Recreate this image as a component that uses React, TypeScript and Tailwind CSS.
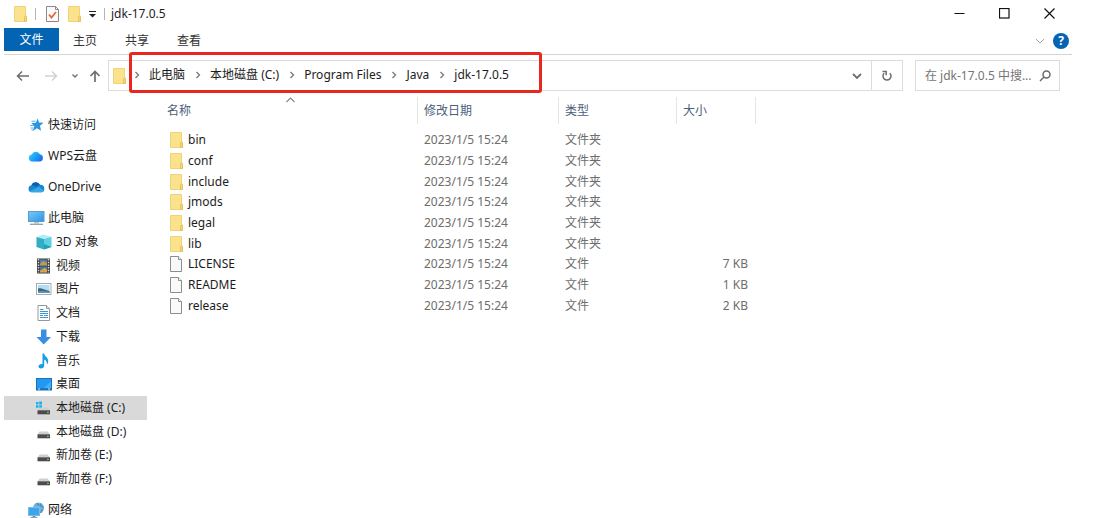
import type { ReactNode } from 'react';

const files = [
  { name: 'bin', type: '文件夹', size: '' },
  { name: 'conf', type: '文件夹', size: '' },
  { name: 'include', type: '文件夹', size: '' },
  { name: 'jmods', type: '文件夹', size: '' },
  { name: 'legal', type: '文件夹', size: '' },
  { name: 'lib', type: '文件夹', size: '' },
  { name: 'LICENSE', type: '文件', size: '7 KB' },
  { name: 'README', type: '文件', size: '1 KB' },
  { name: 'release', type: '文件', size: '2 KB' },
];

const path = ['此电脑', '本地磁盘 (C:)', 'Program Files', 'Java', 'jdk-17.0.5'];

function FolderIcon() {
  return (
    <svg width="13" height="16" viewBox="0 0 13 16" className="shrink-0">
      <path d="M0.5 0.5h11v9.5h1v5.5h-12z" fill="#fbe38e" stroke="#f0d277" />
      <path d="M10.5 15.5v-4.5l1-1.2 1 1.2v4.5z" fill="#f7d774" stroke="#e3be58" strokeWidth="0.8" />
    </svg>
  );
}

function FileIcon() {
  return (
    <svg width="13" height="16" viewBox="0 0 13 16" className="shrink-0">
      <path d="M0.5 0.5h8l3 3v12h-11z" fill="#f9f9f9" stroke="#8d8d8d" />
      <path d="M8.5 0.5v3h3" fill="#fff" stroke="#8d8d8d" />
    </svg>
  );
}

function StarIcon() {
  return (
    <svg width="16" height="16" viewBox="0 0 16 16">
      <path d="M9.7 1.5l1.300 4 4.500.3-3.500 2.900 1 5-3.900-2.500-4.200 2.500 1.500-4.800L3.200 6l4.700-.3z" fill="#2b93e0" />
      <path d="M3.500 4.200h4M2 8.500h4M2.500 11h3M3.500 13h2" stroke="#55b1ee" strokeWidth="1" />
    </svg>
  );
}

function WpsCloudIcon() {
  return (
    <svg width="16" height="16" viewBox="0 0 16 16">
      <defs>
        <linearGradient id="wps" x1="0" y1="0.2" x2="1" y2="0.8">
          <stop offset="0" stopColor="#35cdf4" />
          <stop offset="0.5" stopColor="#15a0f5" />
          <stop offset="1" stopColor="#2463ee" />
        </linearGradient>
      </defs>
      <path d="M4.300 13.500a3.600 3.600 0 0 1-.6-7.100 4.500 4.500 0 0 1 8.200-.2 3.700 3.700 0 0 1-.2 7.300z" fill="url(#wps)" />
    </svg>
  );
}

function OneDriveIcon() {
  return (
    <svg width="17" height="16" viewBox="0 0 17 16">
      <path d="M3.800 13.300A3.600 3.600 0 0 1 3.400 6.200 4.700 4.700 0 0 1 12 5.800a3.800 3.800 0 0 1 1.200 7.500z" fill="#1686d2" />
      <path d="M3.400 6.200A4.700 4.700 0 0 1 12 5.800c-2 .3-2.800 1.300-3.400 2.300C7 6.700 5.500 6 3.400 6.200z" fill="#0b5fae" />
      <path d="M1.500 12.300l9.500-4.500 5 4c-.6 1-1.500 1.500-2.800 1.500H3.800c-1 0-1.800-.4-2.300-1z" fill="#37a7e8" />
    </svg>
  );
}

function PcIcon() {
  return (
    <svg width="17" height="16" viewBox="0 0 17 16">
      <defs>
        <linearGradient id="screen" x1="0" y1="0" x2="1" y2="1">
          <stop offset="0" stopColor="#7cc9f7" />
          <stop offset="1" stopColor="#2695e6" />
        </linearGradient>
      </defs>
      <rect x="0.500" y="1.500" width="15.500" height="10" fill="url(#screen)" stroke="#5b9cc9" />
      <path d="M6 12h5v1.500H6z" fill="#b8c4cc" />
      <path d="M2 14.300h13" stroke="#8b9aa5" strokeWidth="1.200" />
    </svg>
  );
}

function CubeIcon() {
  return (
    <svg width="16" height="16" viewBox="0 0 16 16">
      <path d="M0.500 3L7 0.500 15.500 2.800 8 5z" fill="#b3edf4" />
      <path d="M0.500 3L8 5v10.500L0.500 13z" fill="#30aec4" />
      <path d="M8 5l7.500-2.200V13L8 15.500z" fill="#5fd0df" />
      <path d="M8 10l7.500 3L8 15.500z" fill="#22a2bd" />
    </svg>
  );
}

function VideoIcon() {
  return (
    <svg width="16" height="16" viewBox="0 0 16 16">
      <rect x="1" y="0.500" width="13" height="15" fill="#3c3c3c" />
      <path d="M2.500 1v14M12.500 1v14" stroke="#d8d8d8" strokeWidth="1.500" strokeDasharray="1.500 1.200" />
      <rect x="4" y="1.500" width="7" height="6" fill="#547cae" />
      <rect x="4" y="8.500" width="7" height="6" fill="#4574b8" />
      <path d="M4 6l3-3 4 2v2.500H4z" fill="#b8a14a" />
      <path d="M4 13l4-3 3 1v3.500H4z" fill="#d9a441" />
    </svg>
  );
}

function PictureIcon() {
  return (
    <svg width="16" height="16" viewBox="0 0 16 16">
      <rect x="0.500" y="2.500" width="14.500" height="11" fill="#fff" stroke="#a5acb2" />
      <rect x="2" y="4" width="11.500" height="8" fill="#b5dcf7" />
      <path d="M2 7.500c3-1 5 1 11.500 2.500v2H2z" fill="#3b6876" />
      <path d="M2 10.500c4-1 7 0 11.500.3V12H2z" fill="#5b93bd" />
    </svg>
  );
}

function DocumentIcon() {
  return (
    <svg width="16" height="16" viewBox="0 0 16 16">
      <path d="M2 .5h8.500l3 3v12H2z" fill="#fff" stroke="#939a9f" />
      <path d="M10.500.5v3h3" fill="#e7eaec" stroke="#939a9f" />
      <path d="M4 4.500h3.500M4 6.500h8M4 8.500h8M4 10.500h3M8 10.500h4M4 12.500h8" stroke="#3d96d2" />
    </svg>
  );
}

function DownloadIcon() {
  return (
    <svg width="16" height="16" viewBox="0 0 16 16">
      <path d="M5 0.500h5.500v7.500h4.500L7.700 15.500.5 8H5z" fill="#3a8ee2" />
    </svg>
  );
}

function MusicIcon() {
  return (
    <svg width="16" height="16" viewBox="0 0 16 16">
      <path d="M6.500.5h1.700c.3 3 4 3.700 4 7.500 0 1.600-.6 2.800-1.300 3.700.2-2.600-.6-4.500-2.700-5.200v6c0 1.800-1.400 3-3.200 3-1.500 0-2.500-.8-2.500-2 0-1.500 1.500-2.700 4-2.500z" fill="#189be8" />
    </svg>
  );
}

function DesktopIcon() {
  return (
    <svg width="16" height="16" viewBox="0 0 16 16">
      <rect x="0.500" y="2.500" width="15" height="11.500" fill="#2199f3" stroke="#1673bd" />
      <path d="M1 13h14" stroke="#155a94" />
      <path d="M2 13h2M12 13h2" stroke="#d4ecfc" />
      <path d="M8 12L15 5v7z" fill="#45aef8" />
    </svg>
  );
}

function DriveIcon({ windows = false }: { windows?: boolean }) {
  return (
    <svg width="16" height="16" viewBox="0 0 16 16">
      {windows && (
        <path d="M0 2h2.500v2.500H0zM3.200 1.600H6v2.900H3.200zM0 5.200h2.500v2.500H0zM3.200 5.200H6v2.900H3.200z" fill="#18b2ef" />
      )}
      <path d="M3.500 7.500h8l2.500 3H1.500z" fill="#cfcfcf" />
      <rect x="1.500" y="10.300" width="12.500" height="4" fill="#4c4c4c" />
      <rect x="11" y="11.800" width="1.800" height="1.200" fill="#58d64c" />
    </svg>
  );
}

function NetworkIcon() {
  return (
    <svg width="17" height="17" viewBox="0 0 17 17">
      <circle cx="10.500" cy="6" r="5.500" fill="#72b3dc" />
      <path d="M8 1.500c2 .5 3 1 3 2.500M13 1.500c-1 2 0 3 2.500 4M13 11c0-2 .5-3 2-3.500" fill="none" stroke="#4a88b8" strokeWidth="1.200" />
      <rect x="0.500" y="5.500" width="11" height="8" fill="#3ba6ee" stroke="#77bde8" />
      <path d="M4.500 14h3v1.500h-3z" fill="#7b8d99" />
      <path d="M2.500 15.500h7" stroke="#94a4af" />
    </svg>
  );
}

function Chevron({ className = '' }: { className?: string }) {
  return (
    <svg width="10" height="10" viewBox="0 0 10 10" fill="none" stroke="currentColor" className={className}>
      <path d="M1 3l4 4 4-4" />
    </svg>
  );
}

type NavItem = { label: string; icon: ReactNode; active?: boolean };

const quickItems: NavItem[] = [
  { label: '快速访问', icon: <StarIcon /> },
  { label: 'WPS云盘', icon: <WpsCloudIcon /> },
  { label: 'OneDrive', icon: <OneDriveIcon /> },
];

const pcItems: NavItem[] = [
  { label: '3D 对象', icon: <CubeIcon /> },
  { label: '视频', icon: <VideoIcon /> },
  { label: '图片', icon: <PictureIcon /> },
  { label: '文档', icon: <DocumentIcon /> },
  { label: '下载', icon: <DownloadIcon /> },
  { label: '音乐', icon: <MusicIcon /> },
  { label: '桌面', icon: <DesktopIcon /> },
  { label: '本地磁盘 (C:)', icon: <DriveIcon windows />, active: true },
  { label: '本地磁盘 (D:)', icon: <DriveIcon /> },
  { label: '新加卷 (E:)', icon: <DriveIcon /> },
  { label: '新加卷 (F:)', icon: <DriveIcon /> },
];

function RootLink({ item }: { item: NavItem }) {
  return (
    <a href="#" className="flex h-6 items-center pl-6">
      <span className="w-5 shrink-0">{item.icon}</span>
      {item.label}
    </a>
  );
}

function TitleBar() {
  return (
    <header className="flex h-7 items-center pb-px">
      <div className="flex items-center pl-[10px]">
        <FolderIcon />
        <span className="ml-2 h-3 w-px bg-[#b5b5b5]" />
        <button aria-label="属性" className="ml-[10px]">
          <svg width="14" height="16" viewBox="0 0 14 16">
            <path d="M0.500 0.500h9l3 3v12h-12z" fill="#fafafa" stroke="#8a8a8a" />
            <path d="M9.500.5v3h3" fill="none" stroke="#8a8a8a" />
            <path d="M3 8.500l2.500 3L10 6" fill="none" stroke="#e2683a" strokeWidth="1.800" />
          </svg>
        </button>
        <button aria-label="新建文件夹" className="ml-2">
          <FolderIcon />
        </button>
        <button aria-label="自定义快速访问工具栏" className="ml-[7px]">
          <svg width="9" height="9" viewBox="0 0 9 9">
            <path d="M1 2.500h7" stroke="#222" />
            <path d="M1 5h7L4.500 8.500z" fill="#222" />
          </svg>
        </button>
        <span className="ml-[7px] h-3 w-px bg-[#b5b5b5]" />
      </div>
      <h1 className="ml-[6px] flex-1">jdk-17.0.5</h1>
      <div className="flex text-[#111]">
        <button aria-label="最小化" className="flex h-7 w-[45px] items-center justify-center">
          <svg width="11" height="11" viewBox="0 0 11 11" stroke="currentColor">
            <path d="M0.500 5.500h10" />
          </svg>
        </button>
        <button aria-label="最大化" className="flex h-7 w-[45px] items-center justify-center">
          <svg width="11" height="11" viewBox="0 0 11 11" fill="none" stroke="currentColor">
            <rect x="0.500" y="0.500" width="9.500" height="9.500" strokeWidth="1.200" />
          </svg>
        </button>
        <button aria-label="关闭" className="flex h-7 w-[45px] items-center justify-center">
          <svg width="11" height="11" viewBox="0 0 11 11" stroke="currentColor">
            <path d="M0.500 0.500l10 10M10.500 0.500l-10 10" strokeWidth="1.200" />
          </svg>
        </button>
      </div>
    </header>
  );
}

function Ribbon() {
  return (
    <div className="flex h-[27px] items-start border-b border-[#d5d5d5] text-[#333]">
      <button className="h-[23px] w-[55px] bg-[#0364b4] text-white">文件</button>
      <button className="h-[26px] px-[14px]">主页</button>
      <button className="h-[26px] px-[14px]">共享</button>
      <button className="h-[26px] px-[14px]">查看</button>
      <div className="ml-auto flex h-[26px] items-center gap-2 pr-[3px]">
        <button aria-label="展开功能区" className="text-[#a8a8a8]">
          <Chevron />
        </button>
        <button
          aria-label="帮助"
          className="flex size-4 items-center justify-center rounded-full bg-[#0364b4] text-[12px] leading-4 font-bold text-white"
        >
          ?
        </button>
      </div>
    </div>
  );
}

function AddressRow() {
  return (
    <div className="flex items-center pt-[5px] pr-3">
      <div className="flex w-[104px] shrink-0 items-center pl-3 text-[#6e6e6e]">
        <button aria-label="后退">
          <svg width="14" height="12" viewBox="0 0 14 12" fill="none" stroke="currentColor" strokeWidth="1.500">
            <path d="M13 6H1.500M6 1.500L1.500 6 6 10.500" />
          </svg>
        </button>
        <button aria-label="前进" className="ml-[14px] text-[#d2d2d2]">
          <svg width="14" height="12" viewBox="0 0 14 12" fill="none" stroke="currentColor" strokeWidth="1.500">
            <path d="M1 6h11.500M8 1.500L12.500 6 8 10.500" />
          </svg>
        </button>
        <button aria-label="最近浏览的位置" className="ml-[13px]">
          <svg width="8" height="8" viewBox="0 0 8 8" fill="none" stroke="currentColor" strokeWidth="1.300">
            <path d="M1.500 2.500L4 5l2.500-2.500" />
          </svg>
        </button>
        <button aria-label="上移" className="ml-[10px]">
          <svg width="12" height="12" viewBox="0 0 12 12" fill="none" stroke="currentColor" strokeWidth="1.700">
            <path d="M6 12V1.500M1.500 6L6 1.500 10.500 6" />
          </svg>
        </button>
      </div>

      <div className="flex h-[31px] min-w-0 flex-1 items-center border border-[#dcdcdc] pl-1">
        <FolderIcon />
        <nav aria-label="地址" className="relative ml-[3px] flex h-full w-[413px] items-center pb-px pl-[3px]">
          {path.map((part) => (
            <span key={part} className="flex items-center">
              <svg
                width="10"
                height="10"
                viewBox="0 0 10 10"
                fill="none"
                stroke="#777"
                strokeWidth="1.300"
                className="mr-[7px]"
              >
                <path d="M3.500 2L6.500 5 3.500 8" />
              </svg>
              <a href="#" className="mr-2 whitespace-nowrap">
                {part}
              </a>
            </span>
          ))}
          <span className="pointer-events-none absolute inset-x-0 -top-[9px] -bottom-[3px] rounded-[3px] border-3 border-[#e8281d]" />
        </nav>
        <button aria-label="以前的位置" className="ml-auto flex h-full w-7 items-center justify-center text-[#6e6e6e]">
          <svg width="10" height="10" viewBox="0 0 10 10" fill="none" stroke="currentColor" strokeWidth="1.800">
            <path d="M1 3l4 4 4-4" />
          </svg>
        </button>
        <button
          aria-label="刷新"
          className="flex h-full w-[31px] items-center justify-center border-l border-[#dcdcdc] text-[#6e6e6e]"
        >
          <svg width="12" height="12" viewBox="0 0 12 12" fill="none" stroke="currentColor" strokeWidth="1.500">
            <path d="M8.800 3.200A4 4 0 1 1 3.200 3.200" />
            <path d="M1.500 1.500h3.700v3.700" />
          </svg>
        </button>
      </div>

      <label className="ml-3 flex h-[31px] w-[145px] shrink-0 items-center border border-[#dcdcdc] pr-2 pl-[9px]">
        <input
          type="text"
          aria-label="搜索"
          placeholder="在 jdk-17.0.5 中搜..."
          className="w-0 flex-1 outline-none placeholder:text-[#757575]"
        />
        <svg width="12" height="12" viewBox="0 0 12 12" fill="none" stroke="#6b6b6b" strokeWidth="1.500">
          <circle cx="7.500" cy="4.500" r="3.500" />
          <path d="M5 7L1 11" />
        </svg>
      </label>
    </div>
  );
}

function Sidebar() {
  return (
    <aside className="w-[143px] shrink-0 pt-[22px]">
      <nav aria-label="导航窗格" className="flex flex-col gap-[7px]">
        {quickItems.map((item) => (
          <RootLink key={item.label} item={item} />
        ))}
        <div>
          <RootLink item={{ label: '此电脑', icon: <PcIcon /> }} />
          <ul className="flex h-[261px] flex-col">
            {pcItems.map((item) => (
              <li key={item.label} className={item.active ? 'flex-1 bg-[#d9d9d9]' : 'flex-1'}>
                <a href="#" className="flex h-full items-center pl-8">
                  <span className="w-5 shrink-0">{item.icon}</span>
                  {item.label}
                </a>
              </li>
            ))}
          </ul>
        </div>
        <RootLink item={{ label: '网络', icon: <NetworkIcon /> }} />
      </nav>
    </aside>
  );
}

function FileTable() {
  return (
    <table className="h-[219px] w-[609px] table-fixed text-left text-[#6d6d6d]">
      <colgroup>
        <col className="w-[271px]" />
        <col className="w-[141px]" />
        <col className="w-[118px]" />
        <col className="w-[79px]" />
      </colgroup>
      <thead className="text-[#4c607a]">
        <tr className="h-[33px] align-top">
          <th className="relative p-0 font-normal">
            <div className="flex h-[27px] items-center border-r border-[#e5e5e5] pl-5">名称</div>
            <svg
              width="9"
              height="6"
              viewBox="0 0 9 6"
              fill="none"
              stroke="#8a8a8a"
              className="absolute top-0 left-1/2 ml-[3px]"
            >
              <path d="M0.500 5L4.500 1l4 4" strokeWidth="1.200" />
            </svg>
          </th>
          <th className="p-0 font-normal">
            <div className="flex h-[27px] items-center border-r border-[#e5e5e5] pl-[6px]">修改日期</div>
          </th>
          <th className="p-0 font-normal">
            <div className="flex h-[27px] items-center border-r border-[#e5e5e5] pl-[6px]">类型</div>
          </th>
          <th className="p-0 font-normal">
            <div className="flex h-[27px] items-center border-r border-[#e5e5e5] pl-[6px]">大小</div>
          </th>
        </tr>
      </thead>
      <tbody>
        {files.map((file) => (
          <tr key={file.name}>
            <td className="p-0 text-[#1c1c1c]">
              <a href="#" className="flex items-center gap-[5px] pl-[23px]">
                {file.type === '文件夹' ? <FolderIcon /> : <FileIcon />}
                {file.name}
              </a>
            </td>
            <td className="p-0 pl-[6px]">2023/1/5 15:24</td>
            <td className="p-0 pl-[6px]">{file.type}</td>
            <td className="p-0 pr-2 text-right">{file.size}</td>
          </tr>
        ))}
      </tbody>
    </table>
  );
}

export default function App() {
  return (
    <div className="flex h-screen flex-col overflow-hidden bg-white pr-7 pl-1 font-['Noto_Sans','Noto_Sans_CJK_SC',sans-serif] text-[12px] leading-4 text-[#1c1c1c]">
      <TitleBar />
      <Ribbon />
      <AddressRow />
      <div className="flex">
        <Sidebar />
        <main className="min-w-0 flex-1 pt-[6px]">
          <FileTable />
        </main>
      </div>
    </div>
  );
}
